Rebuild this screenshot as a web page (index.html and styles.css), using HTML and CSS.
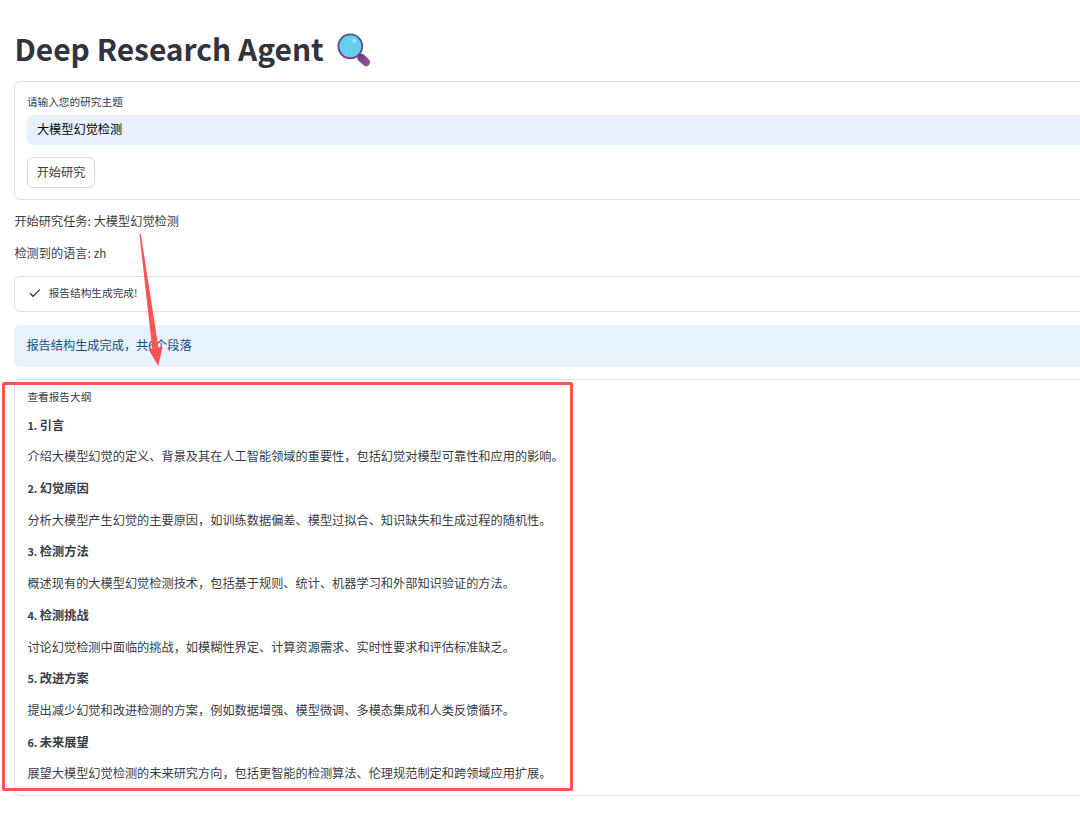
FILE: index.html
```
<!DOCTYPE html>
<html lang="zh-CN">

<head>
  <meta charset="UTF-8" />
  <title>Deep Research Agent</title>
  <link rel="stylesheet" href="styles.css">
</head>

<body>
  <main class="page">
    <h1 class="title">
      <span class="title-text">Deep Research Agent</span>
      <svg class="title-icon" viewBox="0 0 36 36" aria-hidden="true">
        <defs>
          <linearGradient id="rim" x1="0" y1="0" x2="0" y2="1">
            <stop offset="0" stop-color="#3d5a99" />
            <stop offset="1" stop-color="#7b4385" />
          </linearGradient>
          <linearGradient id="handle" gradientUnits="userSpaceOnUse" x1="23" y1="23" x2="33" y2="33">
            <stop offset="0" stop-color="#643a78" />
            <stop offset="1" stop-color="#a05a9c" />
          </linearGradient>
        </defs>
        <path d="M25.6 26L30 30.2" stroke="url(#handle)" stroke-width="8" stroke-linecap="round" />
        <circle cx="14.3" cy="14.3" r="11.9" fill="#66cfec" stroke="url(#rim)" stroke-width="1.9" />
        <circle cx="18.3" cy="8.8" r="1.9" fill="#b5dcf5" />
      </svg>
    </h1>

    <form class="card form">
      <label class="label" for="topic">请输入您的研究主题</label>
      <input class="input" id="topic" type="text" value="大模型幻觉检测" />
      <button class="button" type="button">开始研究</button>
    </form>

    <p>开始研究任务: 大模型幻觉检测</p>
    <p>检测到的语言: <span class="latin-regular">zh</span></p>

    <div class="card status">
      <svg class="check" viewBox="0 0 12 10" aria-hidden="true">
        <path d="M1 5.2L4.1 8.3L10.8 1.6" />
      </svg>
      <span>报告结构生成完成!</span>
    </div>

    <div class="alert">报告结构生成完成，共6个段落</div>

    <section class="card outline">
      <div class="summary">查看报告大纲</div>
      <div class="sections">
        <p><strong><span class="latin">1. </span>引言</strong></p>
        <p>介绍大模型幻觉的定义、背景及其在人工智能领域的重要性，包括幻觉对模型可靠性和应用的影响。</p>
        <p><strong><span class="latin">2. </span>幻觉原因</strong></p>
        <p>分析大模型产生幻觉的主要原因，如训练数据偏差、模型过拟合、知识缺失和生成过程的随机性。</p>
        <p><strong><span class="latin">3. </span>检测方法</strong></p>
        <p>概述现有的大模型幻觉检测技术，包括基于规则、统计、机器学习和外部知识验证的方法。</p>
        <p><strong><span class="latin">4. </span>检测挑战</strong></p>
        <p>讨论幻觉检测中面临的挑战，如模糊性界定、计算资源需求、实时性要求和评估标准缺乏。</p>
        <p><strong><span class="latin">5. </span>改进方案</strong></p>
        <p>提出减少幻觉和改进检测的方案，例如数据增强、模型微调、多模态集成和人类反馈循环。</p>
        <p><strong><span class="latin">6. </span>未来展望</strong></p>
        <p>展望大模型幻觉检测的未来研究方向，包括更智能的检测算法、伦理规范制定和跨领域应用扩展。</p>
      </div>
    </section>
  </main>

  <!-- red annotations over the page -->
  <div class="highlight"></div>
  <svg class="arrow" viewBox="0 0 30 140" aria-hidden="true">
    <path d="M9.4 9L10.8 9L28.4 122.5L32.6 121.8L28.3 141L18.6 124.5L22.2 123.5Z" />
  </svg>
</body>

</html>
```

FILE: styles.css
```
* {
  box-sizing: border-box;
}

body {
  margin: 0;
  width: 1080px;
  height: 815px;
  overflow: hidden;
  position: relative;
  background: #fff;
  color: #393b46;
  font-family: "Noto Sans CJK SC", sans-serif;
  font-size: 12.2px;
  line-height: 19.5px;
}

p {
  margin: 0;
}

/* latin letters and digits sit a little smaller than the CJK text */
.latin {
  font-size: 10.9px;
  line-height: 1;
}

.latin-regular {
  font-size: 11.6px;
  line-height: 1;
}

/* the page runs off the right edge of the window */
.page {
  width: 1120px;
  padding: 28.6px 0 0 14.4px;
  display: flex;
  flex-direction: column;
  gap: 12.2px;
}

.title {
  display: flex;
  align-items: center;
  gap: 12.3px;
  height: 40px;
  margin: 0;
  color: #31333f;
  font-size: 29.95px;
  line-height: 40px;
  font-weight: 700;
}

.title-text {
  padding-bottom: 2px;
}

.title-icon {
  width: 36px;
  height: 36px;
  margin-top: 2px;
  fill: none;
}

.card {
  border: 1px solid #dfe0e3;
  border-radius: 6px;
}

.form {
  height: 119px;
  padding: 11px 11.5px;
  display: flex;
  flex-direction: column;
  align-items: flex-start;
}

.label {
  font-size: 10.67px;
  line-height: 18px;
  margin-bottom: 4px;
}

.input {
  width: 100%;
  height: 30.5px;
  margin-bottom: 12px;
  padding: 0 10px 2px;
  border: none;
  border-radius: 6px;
  outline: none;
  background: #e8f0fe;
  color: #000;
  font: inherit;
}

.button {
  height: 31px;
  padding: 0 8.8px;
  border: 1px solid #d9dadd;
  border-radius: 6px;
  background: #fff;
  color: inherit;
  font: inherit;
}

.status {
  height: 36.6px;
  margin-top: 0.4px;
  padding: 0 13.3px 2px;
  display: flex;
  align-items: center;
  gap: 8px;
  font-size: 10.67px;
}

.check {
  width: 12px;
  height: 10px;
  fill: none;
  stroke: #31333f;
  stroke-width: 1.3;
}

.alert {
  height: 42.7px;
  padding: 11.6px 12px;
  border-radius: 6px;
  background: #e8f2fc;
  color: #124d84;
}

.outline {
  height: 417px;
  padding: 8px 12px 12px;
}

.summary {
  font-size: 10.67px;
  line-height: 17px;
  margin-bottom: 10.3px;
}

.sections {
  display: flex;
  flex-direction: column;
  gap: 12.2px;
}

.highlight {
  position: absolute;
  left: 2px;
  top: 382px;
  width: 571px;
  height: 409px;
  border: 3px solid #ff5252;
  border-radius: 2px;
}

.arrow {
  position: absolute;
  left: 130px;
  top: 225px;
  width: 30px;
  height: 140px;
  overflow: visible;
  fill: #ff5252;
}
```
